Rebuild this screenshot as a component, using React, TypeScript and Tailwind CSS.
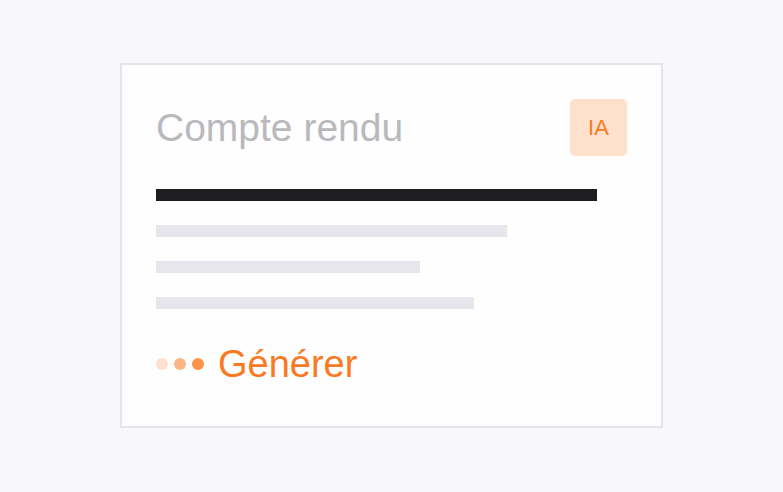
export default function App() {
  return (
    <main
      className="flex h-screen w-full items-center justify-center bg-[#f8f8fc]"
      style={{ fontFamily: '"Liberation Sans", Arial, sans-serif' }}
    >
      {/* Summary card */}
      <div className="mb-px flex h-[365px] w-[543px] flex-col border-2 border-[#e4e4ea] bg-[#fefeff] px-[34px] pt-[34px]">
        {/* Header */}
        <div className="flex h-[57px] items-center justify-between">
          <h1 className="text-[39px] leading-none text-[#b9b9bd]">Compte rendu</h1>
          <div className="flex h-[57px] w-[57px] items-center justify-center rounded-[5px] bg-[#fee1cc] text-[22px] text-[#f97a1f]">
            IA
          </div>
        </div>

        {/* Placeholder lines */}
        <div className="mt-[33px] flex flex-col gap-[24px]">
          <div className="h-[12px] w-[441px] bg-[#1e1d22]" />
          <div className="h-[12px] w-[351px] bg-[#e7e6ed]" />
          <div className="h-[12px] w-[264px] bg-[#e7e6ed]" />
          <div className="h-[12px] w-[318px] bg-[#e7e6ed]" />
        </div>

        {/* Generate action */}
        <div className="mt-[35px] flex h-[40px] items-center gap-[14px]">
          <div className="flex items-center gap-[6px]">
            <span className="h-[12px] w-[12px] rounded-full bg-[#fee1cc]" />
            <span className="h-[12px] w-[12px] rounded-full bg-[#fdb583]" />
            <span className="h-[12px] w-[12px] rounded-full bg-[#fb9448]" />
          </div>
          <span className="text-[38px] leading-none text-[#f97a1f]">Générer</span>
        </div>
      </div>
    </main>
  );
}
